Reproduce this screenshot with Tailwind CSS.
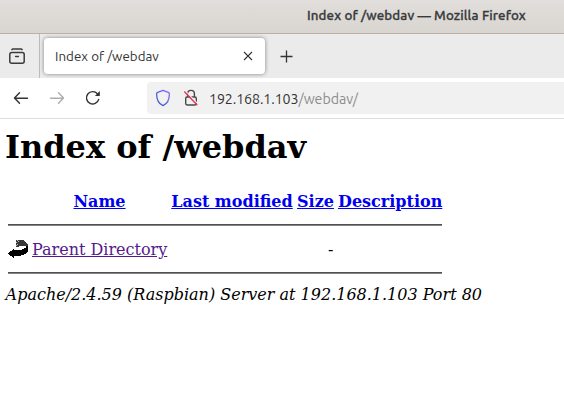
<!DOCTYPE html>
<html lang="en">
<head>
<meta charset="utf-8">
<title>Index of /webdav</title>
<script src="https://cdn.jsdelivr.net/npm/@tailwindcss/browser@4"></script>
</head>
<body class="w-[564px] h-[400px] overflow-hidden bg-white text-black">
<header class="font-['Ubuntu','Noto_Sans',sans-serif] whitespace-nowrap text-[#333]">
  <div class="h-[34px] border-b border-[#b9b0ab] bg-linear-to-b from-[#e1dedb] to-[#d9d5d0] pl-[307px] text-[13.33px] leading-[31px] font-medium text-[#37393b]"><span class="tracking-[0.11px] [-webkit-text-stroke:0.3px_#37393b]">Index of /webdav — Mozilla Firefox</span></div>
  <div class="h-[44px] bg-[#ebebeb] flex">
    <div class="w-[40px] border-r border-[#bcbcbc] flex pl-[9px] pt-[14px]">
      <svg width="16" height="16" viewBox="0 0 16 16" fill="none" stroke="#3b3b3b" stroke-width="1.5" stroke-linecap="round"><path d="M2.9 1.6C3.2 1 3.6.9 4.1.9h7.8c.5 0 .9.1 1.2.7"/><rect x=".8" y="4.5" width="14.4" height="10.7" rx="2"/><path d="M6.6 8.6h2.8"/></svg>
    </div>
    <div class="ml-[4px] mt-[4px] w-[221px] h-[36px] rounded bg-white shadow-[0_0_4px_rgba(0,0,0,0.45)] flex items-center justify-between pl-[11px] pr-[12px]">
      <span class="pt-[2px] text-[13.33px] leading-[18px] tracking-[0.03px]">Index of /webdav</span>
      <svg width="10" height="10" viewBox="0 0 10 10" fill="none" stroke="#333" stroke-width="1.1"><path d="M1 1l8 8M9 1L1 9"/></svg>
    </div>
    <svg class="ml-[15px] mt-[16px]" width="13" height="13" viewBox="0 0 13 13" fill="none" stroke="#333" stroke-width="1.3"><path d="M6.5.5v12M.5 6.5h12"/></svg>
  </div>
  <div class="h-[41px] border-b border-[#dedede] bg-white flex items-start">
    <svg class="ml-[13px] mt-[13px]" width="16" height="14" viewBox="0 0 16 14" fill="none" stroke="#333" stroke-width="1.4" stroke-linecap="round" stroke-linejoin="round"><path d="M6.5 1.8L1.5 7l5 5.2M1.5 7.2h13"/></svg>
    <svg class="ml-[20px] mt-[13px]" width="16" height="14" viewBox="0 0 16 14" fill="none" stroke="#adadad" stroke-width="1.4" stroke-linecap="round" stroke-linejoin="round"><path d="M9.5 1.8l5 5.2-5 5.2M14.5 7.2h-13"/></svg>
    <svg class="ml-[20px] mt-[12px]" width="16" height="16" viewBox="0 0 16 16" fill="none" stroke="#333" stroke-width="1.4" stroke-linecap="round"><path d="M13.7 9.4A6.2 6.2 0 1 1 12.4 3.8"/><path d="M14.8 1v4.9H9.9z" fill="#333" stroke="none"/></svg>
    <div class="ml-[46px] mt-[4px] w-[417px] h-[32px] rounded-l bg-[#f1f1f1] flex items-center">
      <svg class="ml-[8px]" width="16" height="18" viewBox="0 0 16 18" fill="none"><defs><linearGradient id="shield" x1="0" y1="1" x2="1" y2="0"><stop offset="0" stop-color="#275bd5"/><stop offset="1" stop-color="#9269f5"/></linearGradient></defs><path d="M8 1.4l5.3 2c.7.3 1.1.8 1.1 1.5C14.4 10.4 12.3 14.6 8 16.6 3.7 14.6 1.6 10.4 1.6 4.9c0-.7.4-1.2 1.1-1.5z" stroke="url(#shield)" stroke-width="1.3" stroke-linejoin="round"/></svg>
      <svg class="ml-[12px]" width="16" height="18" viewBox="0 0 16 18" fill="none"><path d="M4.6 8V4.8a3.4 3.4 0 0 1 6.8 0V8" stroke="#484848" stroke-width="1.4"/><rect x="2.7" y="8" width="10.6" height="8" rx="1.4" stroke="#484848" stroke-width="1.4"/><path d="M2.4 1.8l13 13.5" stroke="#f1f1f1" stroke-width="1.2"/><path d="M1.3 2.5l13 13.8" stroke="#f0315b" stroke-width="1.3"/></svg>
      <span class="ml-[10px] mt-[2px] text-[14.2px] leading-[20px]"><span class="tracking-[-0.08px]">192.168.1.103</span><span class="text-[#8c8c8c] tracking-[-0.04px]">/webdav/</span></span>
    </div>
  </div>
</header>
<main class="pl-[5px] pt-[10px] font-['DejaVu_Serif',serif] text-[16px] leading-[19px] whitespace-nowrap">
  <h1 class="text-[32px] leading-[37px] font-bold">Index of /webdav</h1>
  <div class="mt-[26px] ml-[3px] w-[434px] grid grid-cols-[20px_135px_122px_37px_104px] gap-x-[4px] text-center">
    <a class="col-start-2 font-bold underline text-[#0000ee]">Name</a>
    <a class="font-bold underline text-[#0000ee]">Last modified</a>
    <a class="font-bold underline text-[#0000ee]">Size</a>
    <a class="font-bold underline text-[#0000ee]">Description</a>
    <div class="col-span-5 mt-[13px] h-[2px] border-t border-b border-t-[#505050] border-b-[#858585]"></div>
    <svg class="mt-[12px]" width="20" height="22" viewBox="0 0 20 22" shape-rendering="crispEdges"><path d="M0 15.5L6 10.5V12.5C11 12.5 16 11.5 18 9.5V8H20V13C18.5 16.5 13 18.3 6 18.5V20.5z" fill="#000"/><path d="M8 1.5H14C17 2.5 20 5 20 8H18C15 7 12 7.5 10 9H8z" fill="#383838"/><path d="M9 2.5h1M8 4.5h1M10 3.5h1M9 6.5h1M8 7.5h1" stroke="#bbb" stroke-width="1"/></svg>
    <a class="mt-[14px] text-left underline text-[#551a8b]">Parent Directory</a>
    <span class="col-start-4 mt-[14px] pr-[0.5px] text-right">-</span>
    <div class="col-span-5 mt-[12px] h-[2px] border-t border-b border-t-[#505050] border-b-[#858585]"></div>
  </div>
  <address class="mt-[11px] ml-[0.6px] italic">Apache/2.4.59 (Raspbian) Server at 192.168.1.103 Port 80</address>
</main>
</body>
</html>
